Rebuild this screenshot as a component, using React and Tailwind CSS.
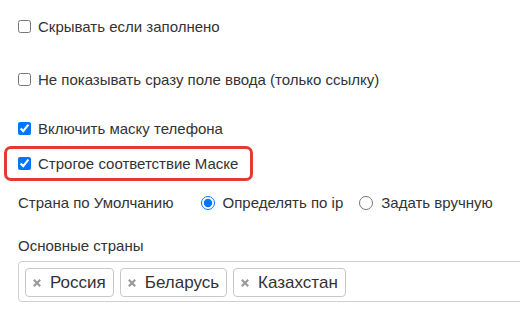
import React from "react";

function CheckRow({ label, checked }) {
  return (
    <label className="flex items-center h-[20px] gap-[7px]">
      <input
        type="checkbox"
        defaultChecked={checked}
        className="m-0 -translate-y-[1px] w-[13px] h-[13px] accent-[#0075ff]"
      />
      <span>{label}</span>
    </label>
  );
}

function Tag({ label }) {
  return (
    <div className="flex items-center h-[29px] pl-[7px] pr-[7px] border border-[#c8c8c8] rounded-[4px] bg-white">
      <svg width="8" height="8" viewBox="0 0 8 8" className="mr-[9px] shrink-0">
        <path d="M0.8 0.8L7.2 7.2M7.2 0.8L0.8 7.2" stroke="#999" strokeWidth="2.2" />
      </svg>
      <span className="text-[17px] text-[#333]">{label}</span>
    </div>
  );
}

export default function App() {
  return (
    <div
      className="w-[520px] h-[313px] overflow-hidden bg-white pl-[18px] pt-[17px] text-[15px] text-[#333]"
      style={{ fontFamily: '"Liberation Sans", Arial, sans-serif' }}
    >
      <CheckRow label="Скрывать если заполнено" />
      <div className="mt-[33px]">
        <CheckRow label="Не показывать сразу поле ввода (только ссылку)" />
      </div>
      <div className="mt-[29px]">
        <CheckRow label="Включить маску телефона" checked />
      </div>

      {/* highlighted option */}
      <div className="mt-[7px] -ml-[14px] w-[249px] border-[3px] border-[#e53935] rounded-[7px] pl-[11px] pt-[5px] pb-[4px]">
        <CheckRow label="Строгое соответствие Маске" checked />
      </div>

      {/* default country */}
      <div className="mt-[12px] flex items-center h-[20px]">
        <span>Страна по Умолчанию</span>
        <label className="flex items-center ml-[27px] gap-[8px]">
          <input type="radio" name="country" defaultChecked className="m-0 w-[14px] h-[14px] accent-[#0075ff]" />
          <span>Определять по ip</span>
        </label>
        <label className="flex items-center ml-[16px] gap-[8px]">
          <input type="radio" name="country" className="m-0 w-[14px] h-[14px]" />
          <span>Задать вручную</span>
        </label>
      </div>

      <div className="mt-[23px] h-[20px] flex items-center">Основные страны</div>

      <div className="mt-[5px] w-[540px] border border-[#cfcfcf] rounded-[4px] pl-[6px] pt-[6px] pb-[4px] flex gap-[6px]">
        <Tag label="Россия" />
        <Tag label="Беларусь" />
        <Tag label="Казахстан" />
      </div>
    </div>
  );
}
